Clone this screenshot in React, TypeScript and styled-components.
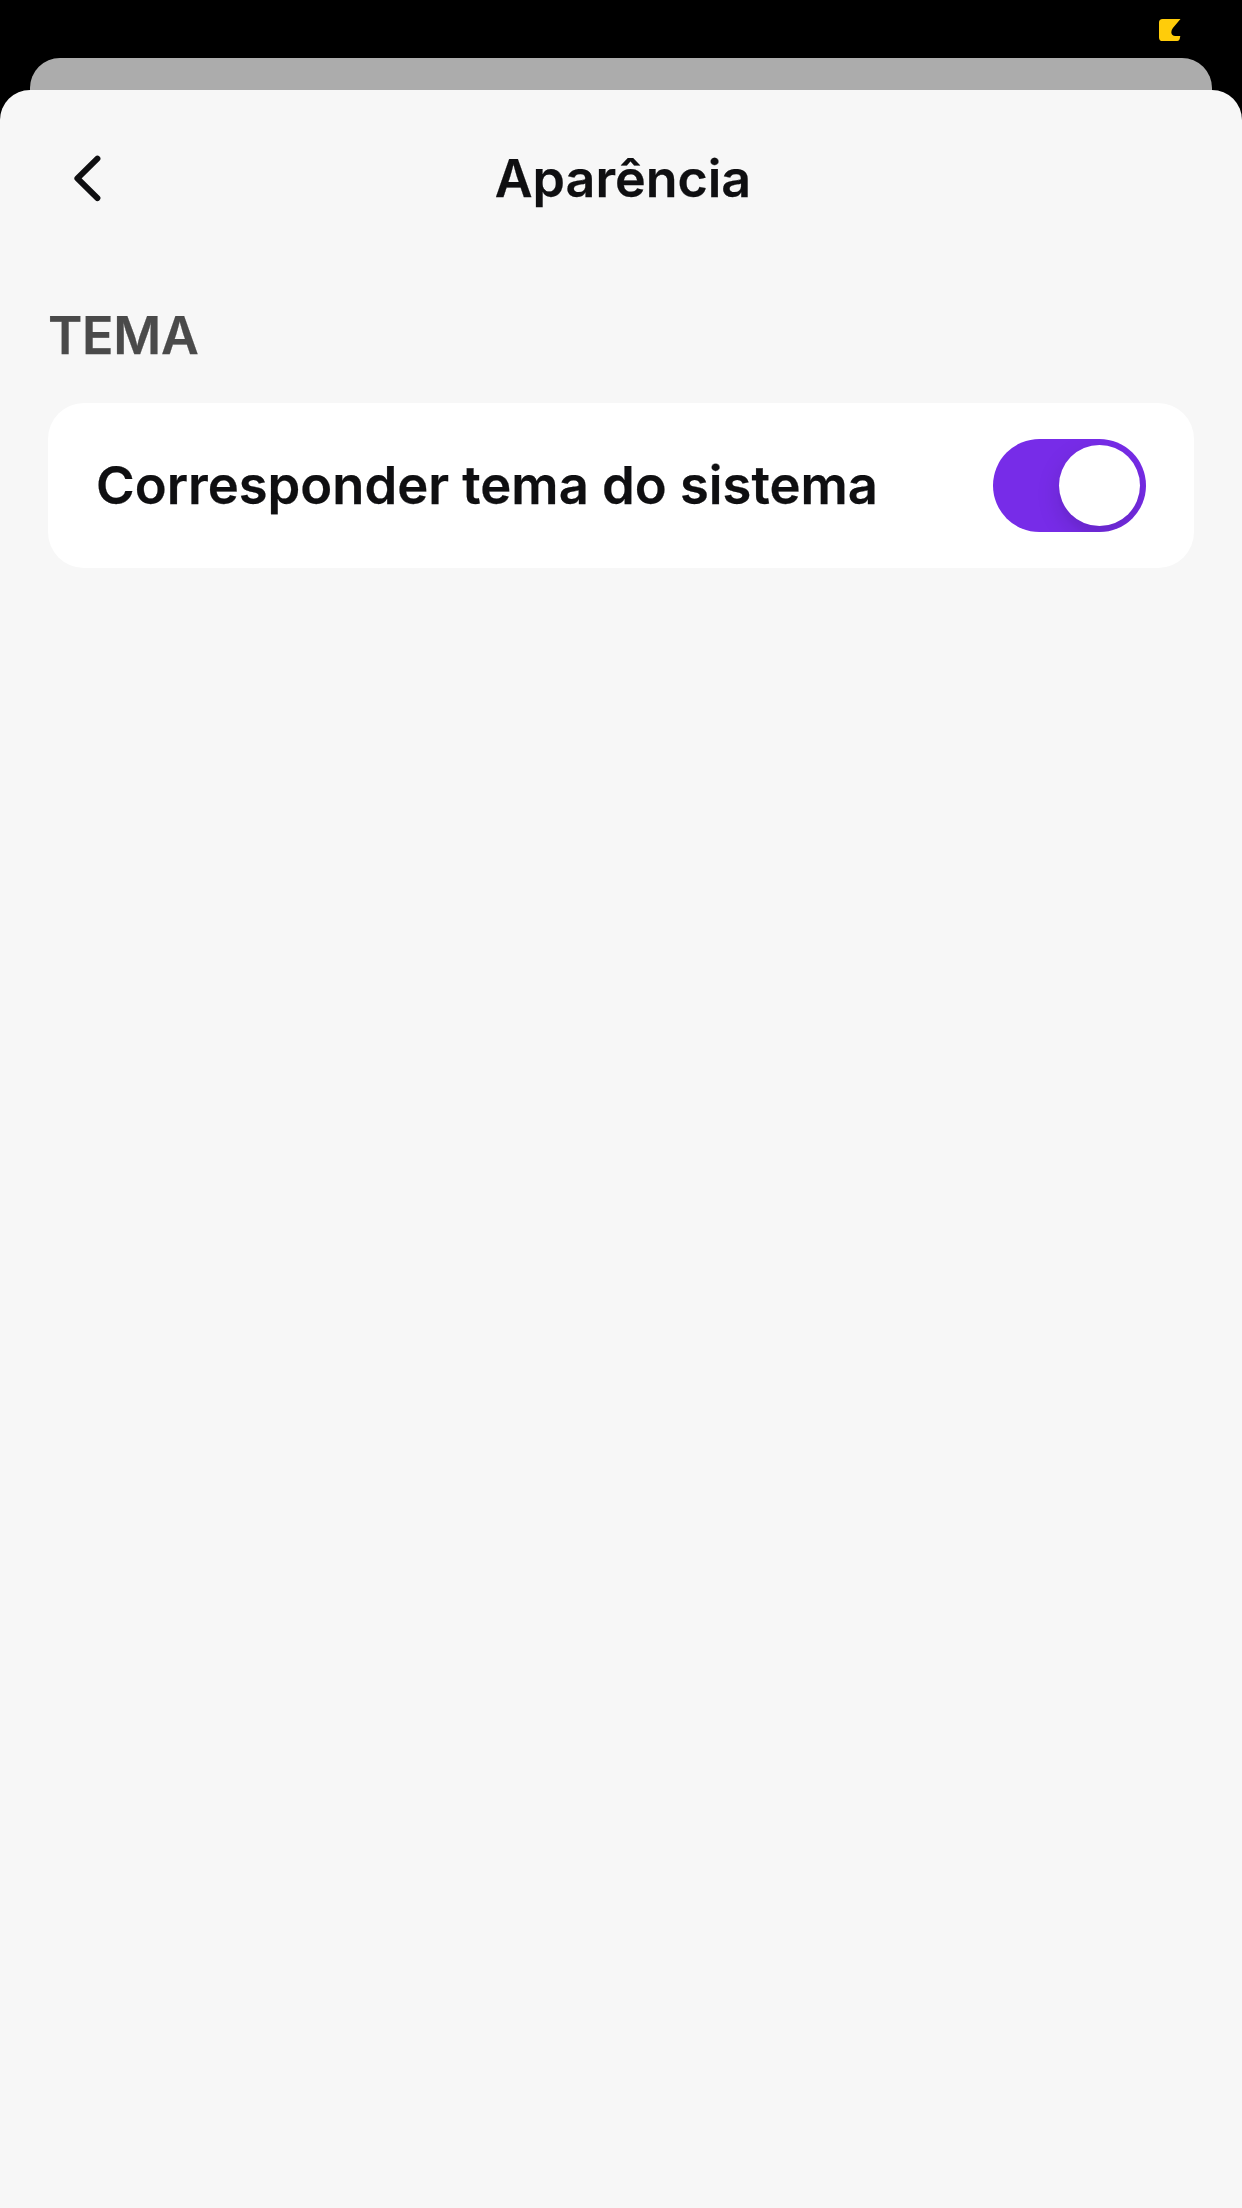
import React, { useState } from "react";
import styled, { createGlobalStyle } from "styled-components";

const GlobalStyle = createGlobalStyle`
  *, *::before, *::after { box-sizing: border-box; }
  body { margin: 0; background: #000; }
`;

const Screen = styled.main`
  display: flex;
  flex-direction: column;
  width: 1242px;
  height: 2208px;
  overflow: hidden;
  background: #000;
  font-family: Inter, "Liberation Sans", sans-serif;
  font-weight: 600;
  color: #0f0f11;
  -webkit-text-stroke: 0.25px currentColor;
`;

const StatusBar = styled.div`
  display: flex;
  justify-content: flex-end;
  height: 58px;
  padding: 19px 61px 0 0;
`;

const SheetBehind = styled.div`
  flex: none;
  height: 32px;
  margin: 0 30px;
  border-radius: 30px 30px 0 0;
  background: #acacac;
`;

const Sheet = styled.section`
  flex: 1;
  border-radius: 30px 30px 0 0;
  background: #f7f7f7;
`;

const Header = styled.header`
  display: grid;
  grid-template-columns: 178px 1fr 174px;
  align-items: center;
  height: 176px;
`;

const BackButton = styled.button`
  display: flex;
  padding: 0;
  margin: 1px 0 0 74px;
  border: 0;
  background: none;
  color: inherit;
`;

const Title = styled.h1`
  margin: 2px 0 0;
  font-size: 52px;
  line-height: 64px;
  font-weight: 600;
  text-align: center;
`;

const Group = styled.div`
  padding: 38px 48px 0;
`;

const GroupTitle = styled.h2`
  margin: 0 0 35px;
  font-size: 52px;
  line-height: 64px;
  letter-spacing: -0.3px;
  font-weight: 600;
  color: #4a4a4a;
  -webkit-text-stroke-color: #4a4a4a;
`;

const Card = styled.div`
  display: flex;
  align-items: center;
  justify-content: space-between;
  height: 165px;
  padding: 0 48px;
  border-radius: 36px;
  background: #fff;
`;

const Label = styled.span`
  padding-bottom: 2px;
  font-size: 52.5px;
  line-height: 64px;
  white-space: nowrap;
`;

const Track = styled.button<{ $on: boolean }>`
  display: flex;
  align-items: center;
  justify-content: ${(p) => (p.$on ? "flex-end" : "flex-start")};
  width: 153px;
  height: 93px;
  padding: 0 6px;
  border: 0;
  border-radius: 47px;
  overflow: hidden;
  background: ${(p) => (p.$on ? "#772ce8" : "#e3e3e5")};
`;

const Thumb = styled.span`
  width: 81px;
  height: 81px;
  border-radius: 50%;
  background: #fff;
  box-shadow: 0 9px 24px rgba(0, 0, 0, 0.13), 0 9px 3px rgba(0, 0, 0, 0.02);
`;

export default function App() {
  const [matchSystem, setMatchSystem] = useState(true);

  return (
    <>
      <GlobalStyle />
      <Screen>
        <StatusBar>
          <svg width="22" height="22" viewBox="0 0 22 22" aria-hidden="true">
            <path
              d="M3.6 0H21.5L13.9 9Q12.2 11.2 12.3 13.2C12.5 15.8 14 17 16.2 17H21.3L20.7 20Q20.2 22 18.3 22H3.6Q0 22 0 18.4V3.6Q0 0 3.6 0Z"
              fill="#ffcc0a"
            />
          </svg>
        </StatusBar>
        <SheetBehind />
        <Sheet>
          <Header>
            <BackButton aria-label="Voltar">
              <svg width="27" height="47" viewBox="0 0 27 47" fill="none">
                <path
                  d="M23.4 3.7L3.4 23.4L23.4 43.1"
                  stroke="currentColor"
                  strokeWidth="6"
                  strokeLinecap="round"
                  strokeLinejoin="round"
                />
              </svg>
            </BackButton>
            <Title>Aparência</Title>
          </Header>
          <Group>
            <GroupTitle>TEMA</GroupTitle>
            <Card>
              <Label>Corresponder tema do sistema</Label>
              <Track
                $on={matchSystem}
                role="switch"
                aria-checked={matchSystem}
                aria-label="Corresponder tema do sistema"
                onClick={() => setMatchSystem(!matchSystem)}
              >
                <Thumb />
              </Track>
            </Card>
          </Group>
        </Sheet>
      </Screen>
    </>
  );
}
